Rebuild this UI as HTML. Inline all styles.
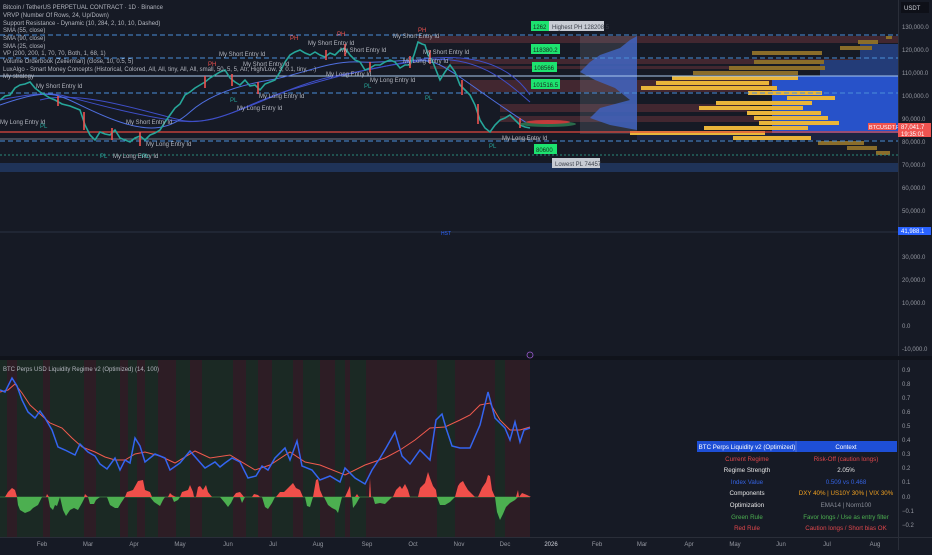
<!DOCTYPE html>
<html><head><meta charset="utf-8"><style>
html,body{margin:0;padding:0;background:#161a25;}
body{width:932px;height:550px;overflow:hidden;position:relative;font-family:"Liberation Sans",sans-serif;}
svg text{font-family:"Liberation Sans",sans-serif;}
</style></head><body>
<svg width="932" height="550" viewBox="0 0 932 550" xmlns="http://www.w3.org/2000/svg">
<rect width="932" height="550" fill="#161a25"/>
<rect x="0" y="163" width="898" height="9" fill="#1f3358"/>
<g fill="#4a2a32" opacity="0.85">
<rect x="418" y="36" width="480" height="7"/>
<rect x="450" y="59" width="448" height="5"/>
<rect x="430" y="66" width="468" height="3"/>
<rect x="470" y="80" width="330" height="12"/>
<rect x="500" y="104" width="250" height="8"/>
<rect x="500" y="116" width="300" height="6"/>
</g>
<path d="M637,36 L630,40 620,48 600,55 590,62 580,72 595,80 615,88 630,100 600,108 590,118 610,125 637,130 Z" fill="#2b57c8" opacity="0.85"/>
<rect x="580" y="36" width="57" height="98" fill="#8a8f9c" opacity="0.22"/>
<rect x="772" y="76" width="126" height="64" fill="#2752c9"/>
<rect x="860" y="44" width="38" height="32" fill="#233c78"/>
<rect x="820" y="60" width="78" height="16" fill="#233c78"/>
<rect x="637" y="133" width="261" height="7" fill="#1d2440"/>
<g fill="#e9b53a">
<rect x="672" y="76" width="126" height="4"/>
<rect x="656" y="81" width="113" height="4"/>
<rect x="641" y="86" width="136" height="4"/>
<rect x="748" y="91" width="74" height="4"/>
<rect x="787" y="96" width="48" height="4"/>
<rect x="716" y="101" width="96" height="4"/>
<rect x="699" y="106" width="104" height="4"/>
<rect x="747" y="111" width="74" height="4"/>
<rect x="754" y="116" width="74" height="4"/>
<rect x="759" y="121" width="80" height="4"/>
<rect x="704" y="126" width="104" height="4"/>
<rect x="630" y="131" width="135" height="4"/>
<rect x="733" y="136" width="78" height="4"/>
</g>
<g fill="#8a6d2a">
<rect x="858" y="40" width="20" height="4"/><rect x="840" y="46" width="32" height="4"/>
<rect x="752" y="51" width="70" height="4"/><rect x="754" y="60" width="70" height="4"/>
<rect x="729" y="66" width="96" height="4"/><rect x="693" y="71" width="105" height="4"/>
<rect x="818" y="141" width="46" height="4"/><rect x="847" y="146" width="30" height="4"/>
<rect x="876" y="151" width="14" height="4"/><rect x="886" y="36" width="6" height="3"/>
</g>
<g stroke="#4b8fd9" stroke-width="1" stroke-dasharray="5,3" fill="none">
<line x1="0" y1="35" x2="898" y2="35"/>
<line x1="0" y1="58" x2="898" y2="58"/>
<line x1="0" y1="93" x2="898" y2="93"/>
<line x1="0" y1="141" x2="898" y2="141"/>
</g>
<line x1="0" y1="76" x2="898" y2="76" stroke="#a9c9f0" stroke-width="1"/>
<line x1="0" y1="139" x2="540" y2="139" stroke="#c9d3e0" stroke-width="0.6"/>
<line x1="0" y1="132" x2="898" y2="132" stroke="#e0483f" stroke-width="1.2"/>
<line x1="0" y1="155" x2="898" y2="155" stroke="#2a8a7a" stroke-width="1" stroke-dasharray="2,2"/>
<line x1="0" y1="232" x2="898" y2="232" stroke="#2a3142" stroke-width="1"/>
<!-- SMAs -->
<path d="M0,100 C25,95 45,92 60,95 S120,112 170,120 S240,105 290,90 S380,65 430,60 S510,85 530,102" stroke="#3f4fc8" fill="none" stroke-width="1"/>
<path d="M40,100 C80,90 140,110 180,120 S280,85 340,75 S420,55 460,58 S520,80 530,95" stroke="#3f4fc8" fill="none" stroke-width="1"/>
<path d="M0,105 C20,98 40,92 55,95 S90,112 120,122 S170,130 190,112 S240,85 270,80 S330,60 360,62 S420,55 440,65 S490,100 530,125" stroke="#4f6fe0" fill="none" stroke-width="1"/>
<!-- price -->
<polyline fill="none" stroke="#26a69a" stroke-width="1.6" points="0,100 5,96 10,95 15,88 20,85 25,84 30,82 35,88 40,92 45,95 50,98 55,100 62,104 70,106 80,110 85,125 90,135 95,140 100,132 105,134 110,135 115,130 120,138 125,140 130,142 135,138 140,136 145,140 150,135 155,133 160,130 165,122 170,115 175,108 180,104 185,95 190,92 195,88 200,85 205,82 210,78 215,75 220,72 225,70 230,78 235,82 240,85 245,80 250,86 255,85 260,90 265,84 270,82 275,80 280,72 285,62 290,55 295,52 300,50 305,53 310,55 315,52 320,55 325,57 330,53 335,55 340,50 345,48 350,55 355,60 360,62 365,70 370,68 375,65 380,65 385,62 390,60 395,62 400,68 405,65 410,65 414,55 418,42 422,44 425,45 428,55 432,60 436,70 440,80 445,72 450,65 455,72 460,85 465,90 470,95 475,105 480,120 485,128 490,132 495,125 500,120 505,118 510,115 515,120 520,125 525,127 530,128"/>
<g stroke="#ef5350" stroke-width="1.6">
<line x1="58" y1="96" x2="58" y2="106"/><line x1="84" y1="112" x2="84" y2="130"/><line x1="112" y1="128" x2="112" y2="140"/>
<line x1="140" y1="132" x2="140" y2="146"/><line x1="205" y1="76" x2="205" y2="88"/><line x1="232" y1="74" x2="232" y2="86"/>
<line x1="258" y1="82" x2="258" y2="94"/><line x1="345" y1="44" x2="345" y2="56"/><line x1="370" y1="62" x2="370" y2="72"/>
<line x1="430" y1="50" x2="430" y2="64"/><line x1="462" y1="80" x2="462" y2="95"/><line x1="478" y1="104" x2="478" y2="124"/>
<line x1="520" y1="118" x2="520" y2="128"/><line x1="326" y1="50" x2="326" y2="60"/><line x1="410" y1="56" x2="410" y2="68"/>
</g>
<ellipse cx="548" cy="124" rx="28" ry="3" fill="#2a6a4a"/>
<ellipse cx="548" cy="122" rx="22" ry="2" fill="#c23b3b"/>
<g font-size="6" fill="#b2b5be">
<text x="0" y="124">My Long Entry Id</text><text x="36" y="88">My Short Entry Id</text>
<text x="113" y="158">My Long Entry Id</text><text x="126" y="124">My Short Entry Id</text>
<text x="146" y="146">My Long Entry Id</text><text x="219" y="56">My Short Entry Id</text>
<text x="243" y="66">My Short Entry Id</text><text x="259" y="98">My Long Entry Id</text>
<text x="237" y="110">My Long Entry Id</text><text x="308" y="45">My Short Entry Id</text>
<text x="340" y="52">My Short Entry Id</text><text x="326" y="76">My Long Entry Id</text>
<text x="370" y="82">My Long Entry Id</text><text x="393" y="38">My Short Entry Id</text>
<text x="423" y="54">My Short Entry Id</text><text x="403" y="63">My Long Entry Id</text>
<text x="502" y="140">My Long Entry Id</text>
</g>
<g font-size="6" fill="#26a69a"><text x="40" y="128">PL</text><text x="100" y="158">PL</text><text x="142" y="158">PL</text><text x="230" y="102">PL</text><text x="364" y="88">PL</text><text x="425" y="100">PL</text><text x="489" y="148">PL</text></g>
<g font-size="6" fill="#ef5350"><text x="208" y="66">PH</text><text x="290" y="40">PH</text><text x="337" y="36">PH</text><text x="418" y="32">PH</text></g>
<rect x="531" y="21" width="18" height="10" fill="#1de36f"/><text x="533" y="29" font-size="6" fill="#1a2a20">1262</text>
<rect x="549" y="21" width="55" height="10" fill="#c8ccd4"/><text x="552" y="29" font-size="6" fill="#3a3f4a">Highest PH 128208.5</text>
<rect x="531" y="44" width="29" height="10" fill="#1de36f"/><text x="533" y="52" font-size="6" fill="#1a2a20">118380.2</text>
<rect x="532" y="62" width="25" height="10" fill="#1de36f"/><text x="534" y="70" font-size="6" fill="#1a2a20">108566</text>
<rect x="531" y="79" width="29" height="10" fill="#1de36f"/><text x="533" y="87" font-size="6" fill="#1a2a20">101516.5</text>
<rect x="534" y="144" width="23" height="10" fill="#1de36f"/><text x="536" y="152" font-size="6" fill="#1a2a20">80600</text>
<rect x="552" y="158" width="48" height="10" fill="#c8ccd4"/><text x="555" y="166" font-size="6" fill="#3a3f4a">Lowest PL 74457</text>
<g font-size="6" fill="#b2b5be">
<text x="3" y="9">Bitcoin / TetherUS PERPETUAL CONTRACT · 1D · Binance</text>
<text x="3" y="17">VRVP (Number Of Rows, 24, Up/Down)</text>
<text x="3" y="25">Support Resistance - Dynamic (10, 284, 2, 10, 10, Dashed)</text>
<text x="3" y="32">SMA (55, close)</text>
<text x="3" y="40">SMA (90, close)</text>
<text x="3" y="48">SMA (25, close)</text>
<text x="3" y="55">VP (200, 200, 1, 70, 70, Both, 1, 68, 1)</text>
<text x="3" y="63">Volume Orderbook (Zeiierman) (close, 10, 0.5, 5)</text>
<text x="3" y="71">LuxAlgo - Smart Money Concepts (Historical, Colored, All, All, tiny, All, All, small, 50, 5, 5, Atr, High/Low, 3, 0.1, tiny, ...)</text>
<text x="3" y="78">My strategy</text>
</g>
<line x1="898.5" y1="0" x2="898.5" y2="550" stroke="#2a2e39"/>
<rect x="901" y="2" width="28" height="11" fill="#0e1018"/><text x="904" y="10" font-size="6" fill="#d1d4dc">USDT</text>
<g font-size="6" fill="#9598a1">
<text x="902" y="29">130,000.0</text><text x="902" y="52">120,000.0</text><text x="902" y="75">110,000.0</text>
<text x="902" y="98">100,000.0</text><text x="902" y="121">90,000.0</text><text x="902" y="144">80,000.0</text>
<text x="902" y="167">70,000.0</text><text x="902" y="190">60,000.0</text><text x="902" y="213">50,000.0</text>
<text x="902" y="259">30,000.0</text><text x="902" y="282">20,000.0</text><text x="902" y="305">10,000.0</text>
<text x="902" y="328">0.0</text><text x="902" y="351">-10,000.0</text>
</g>
<rect x="868" y="123" width="28" height="7" fill="#ef5350"/><text x="869" y="129" font-size="5.5" fill="#fff">BTCUSDT.P</text>
<rect x="898" y="123" width="33" height="14" fill="#ef5350"/><text x="901" y="129" font-size="6" fill="#fff">87,041.7</text><text x="901" y="136" font-size="6" fill="#fff">19:35:01</text>
<rect x="898" y="227" width="33" height="8" fill="#2962ff"/><text x="901" y="233" font-size="6" fill="#fff">41,988.1</text>
<text x="441" y="235" font-size="5" fill="#2962ff">HST</text>
<rect x="0" y="356" width="932" height="4" fill="#10131b"/>
<circle cx="530" cy="355" r="3" fill="none" stroke="#9c5bd1" stroke-width="0.8"/>
<!-- oscillator stripes -->
<rect x="0" y="360" width="530" height="177" fill="#1b2924"/>
<g fill="#2d1d25">
<rect x="7" y="360" width="10" height="177"/><rect x="43" y="360" width="7" height="177"/>
<rect x="84" y="360" width="12" height="177"/><rect x="120" y="360" width="8" height="177"/>
<rect x="137" y="360" width="8" height="177"/><rect x="158" y="360" width="18" height="177"/>
<rect x="190" y="360" width="12" height="177"/><rect x="233" y="360" width="13" height="177"/>
<rect x="258" y="360" width="14" height="177"/><rect x="293" y="360" width="10" height="177"/>
<rect x="320" y="360" width="15" height="177"/><rect x="345" y="360" width="5" height="177"/>
<rect x="366" y="360" width="27" height="177"/><rect x="393" y="360" width="44" height="177"/>
<rect x="455" y="360" width="22" height="177"/><rect x="477" y="360" width="18" height="177"/>
<rect x="505" y="360" width="25" height="177"/>
</g>
<!-- histogram -->
<line x1="0" y1="497" x2="530" y2="497" stroke="#4caf50" stroke-width="0.6"/>
<g fill="#f04f4a">
<polygon points="5,497 8,492 12,488 15,490 17,497"/>
<polygon points="46,497 47,494 49,497"/><polygon points="84,497 85,494 88,497"/>
<polygon points="125,497 127,492 133,490 138,481 143,480 145,490 150,492 152,497"/>
<polygon points="168,497 170,493 172,495 176,497"/>
<polygon points="180,497 182,492 188,490 190,485 193,492 194,497"/>
<polygon points="196,497 198,487 200,486 203,490 206,485 208,492 212,497"/>
<polygon points="233,497 236,493 240,492 244,497"/>
<polygon points="252,497 254,494 258,495 260,497"/>
<polygon points="276,497 280,492 284,492 290,486 293,483 296,488 300,490 303,497"/>
<polygon points="313,497 316,480 318,479 320,490 323,497"/>
<polygon points="345,497 350,486 351,497"/><polygon points="355,497 357,494 359,497"/><polygon points="369,497 370,478 371,497"/>
<polygon points="393,497 396,490 400,486 402,489 405,484 408,490 410,497"/>
<polygon points="418,497 420,488 425,483 428,472 430,478 433,486 436,490 437,497"/>
<polygon points="455,497 458,486 460,483 463,481 465,485 468,490 470,492 475,497"/>
<polygon points="478,497 482,488 486,482 488,475 490,476 492,490 495,497"/>
<polygon points="516,497 518,490 519,497 522,493 527,495 531,497"/>
</g>
<g fill="#4caf50">
<polygon points="17,497 18,505 20,510 25,513 30,511 33,508 38,505 42,497"/>
<polygon points="48,497 50,507 53,510 55,505 57,506 60,497"/>
<polygon points="60,497 63,510 66,516 70,510 74,508 78,510 82,503 85,497"/>
<polygon points="88,497 90,504 94,504 96,500 100,497"/>
<polygon points="107,497 110,505 115,508 118,508 121,503 125,497"/>
<polygon points="150,497 154,502 160,506 163,500 165,497"/>
<polygon points="172,497 174,502 178,500 180,497"/>
<polygon points="220,497 225,503 228,507 231,503 234,497"/>
<polygon points="240,497 242,503 245,497"/>
<polygon points="262,497 265,507 268,509 272,503 275,497"/>
<polygon points="305,497 307,506 310,507 313,497"/>
<polygon points="324,497 328,505 332,508 336,510 338,513 340,505 342,497"/>
<polygon points="352,497 353,508 356,504 360,497"/>
<polygon points="373,497 375,504 380,503 385,504 392,497"/>
<polygon points="437,497 440,505 445,505 450,502 455,497"/>
<polygon points="495,497 497,512 500,520 503,514 506,507 510,503 515,500 518,497"/>
</g>
<polyline fill="none" stroke="#f05a4e" stroke-width="1" points="0,392 8,390 15,384 22,393 30,405 40,414 50,423 62,428 72,438 82,447 95,452 105,457 115,460 125,460 135,454 145,452 160,456 175,463 195,451 210,458 230,455 255,470 270,465 290,452 305,462 320,465 345,475 365,465 385,458 400,450 415,440 430,428 445,427 460,420 470,415 480,405 490,403 500,420 510,430 520,430 530,427"/>
<polyline fill="none" stroke="#3465f0" stroke-width="1.5" points="0,390 5,392 12,378 17,386 22,400 28,412 35,418 40,411 45,418 52,430 58,447 65,450 75,455 80,444 88,452 95,456 100,464 107,469 115,458 120,470 125,460 130,463 135,438 140,446 145,462 155,454 165,458 170,470 180,463 190,451 197,459 205,468 215,462 220,467 225,463 232,458 240,462 248,478 256,476 262,466 268,470 275,458 285,448 290,460 297,441 302,466 312,470 320,480 330,476 340,482 345,468 355,478 365,484 372,470 380,458 386,448 395,432 402,456 410,464 420,450 430,460 436,420 442,414 446,428 452,446 460,448 470,448 480,425 488,392 495,418 505,428 510,440 515,422 520,442 524,430 530,428"/>
<g font-size="6" fill="#9598a1">
<text x="902" y="372">0.9</text><text x="902" y="386">0.8</text><text x="902" y="400">0.7</text><text x="902" y="414">0.6</text>
<text x="902" y="428">0.5</text><text x="902" y="442">0.4</text><text x="902" y="456">0.3</text><text x="902" y="470">0.2</text>
<text x="902" y="484">0.1</text><text x="902" y="499">0.0</text><text x="902" y="513">−0.1</text><text x="902" y="527">−0.2</text>
</g>
<text x="3" y="371" font-size="6" fill="#b2b5be">BTC Perps USD Liquidity Regime v2 (Optimized) (14, 100)</text>
<rect x="697" y="441" width="201" height="95" fill="#161a25"/>
<rect x="697" y="441" width="200" height="11" fill="#1e4fd6"/>
<line x1="796" y1="441" x2="796" y2="452" stroke="#7a90d8" stroke-width="0.6"/>
<g font-size="6.2" text-anchor="middle">
<text x="747" y="449" fill="#fff">BTC Perps Liquidity v2 (Optimized)</text><text x="846" y="449" fill="#fff">Context</text>
<text x="747" y="461" fill="#e0474c">Current Regime</text><text x="846" y="461" fill="#e0474c">Risk-Off (caution longs)</text>
<text x="747" y="472" fill="#e6e6e6">Regime Strength</text><text x="846" y="472" fill="#e6e6e6">2.05%</text>
<text x="747" y="484" fill="#3462e0">Index Value</text><text x="846" y="484" fill="#3462e0">0.509 vs 0.468</text>
<text x="747" y="495" fill="#e6e6e6">Components</text><text x="846" y="495" fill="#f0a020">DXY 40% | US10Y 30% | VIX 30%</text>
<text x="747" y="507" fill="#e6e6e6">Optimization</text><text x="846" y="507" fill="#888c96">EMA14 | Norm100</text>
<text x="747" y="519" fill="#4caf50">Green Rule</text><text x="846" y="519" fill="#4caf50">Favor longs / Use as entry filter</text>
<text x="747" y="530" fill="#e0474c">Red Rule</text><text x="846" y="530" fill="#e0474c">Caution longs / Short bias OK</text>
</g>
<line x1="0" y1="537.5" x2="932" y2="537.5" stroke="#2a2e39"/>
<g font-size="6" fill="#9598a1" text-anchor="middle">
<text x="42" y="546">Feb</text><text x="88" y="546">Mar</text><text x="134" y="546">Apr</text><text x="180" y="546">May</text>
<text x="228" y="546">Jun</text><text x="273" y="546">Jul</text><text x="318" y="546">Aug</text><text x="367" y="546">Sep</text>
<text x="413" y="546">Oct</text><text x="459" y="546">Nov</text><text x="505" y="546">Dec</text><text x="551" y="546" fill="#d1d4dc">2026</text>
<text x="597" y="546">Feb</text><text x="642" y="546">Mar</text><text x="689" y="546">Apr</text><text x="735" y="546">May</text>
<text x="781" y="546">Jun</text><text x="827" y="546">Jul</text><text x="875" y="546">Aug</text>
</g>
</svg>
</body></html>
